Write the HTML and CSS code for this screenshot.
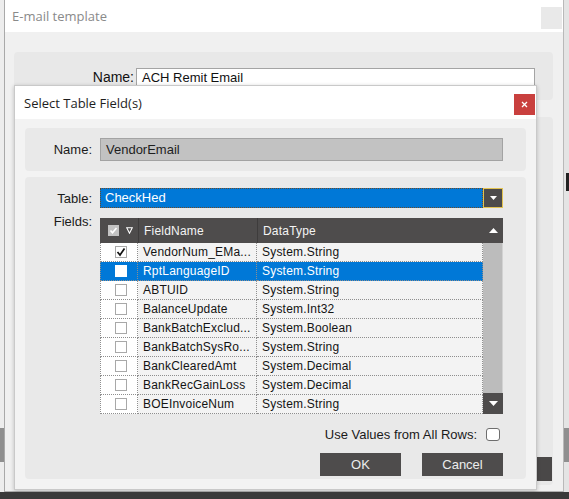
FILE: index.html
```html
<!DOCTYPE html>
<html>
<head>
<meta charset="utf-8">
<link rel="stylesheet" href="styles.css">
</head>
<body>
<div class="desktop">
  <div class="edge edge-left"><div class="edge-block"></div></div>
  <div class="edge edge-right"><div class="edge-mark"></div><div class="edge-block"></div></div>

  <div class="win">
    <div class="win-title">
      <span class="win-title-text">E-mail template</span>
      <span class="win-close"></span>
    </div>
    <div class="win-body">
      <div class="win-panel win-name">
        <span class="win-label">Name:</span>
        <div class="win-input">ACH Remit Email</div>
      </div>
      <div class="win-panel win-main">
        <div class="win-btn"></div>
      </div>
    </div>
  </div>

  <div class="dlg">
    <div class="dlg-title">
      <span class="dlg-title-text">Select Table Field(s)</span>
      <span class="dlg-close">
        <svg width="7" height="7" viewBox="0 0 7 7"><path d="M1 1 L6 6 M6 1 L1 6" stroke="#fff" stroke-width="1.3"/></svg>
      </span>
    </div>
    <div class="dlg-body">
      <div class="panel panel-name">
        <span class="lbl">Name:</span>
        <div class="ro-input">VendorEmail</div>
      </div>
      <div class="panel panel-main">
        <span class="lbl">Table:</span>
        <div class="combo">
          <div class="combo-value">CheckHed</div>
          <div class="combo-btn">
            <svg width="7" height="4" viewBox="0 0 7 4"><polygon points="0,0 7,0 3.5,4" fill="#fff"/></svg>
          </div>
        </div>

        <span class="lbl lbl-fields">Fields:</span>
        <div class="grid">
          <div class="grid-table">
            <div class="hcell hcell-check">
              <span class="hcheck">
                <svg width="11" height="11" viewBox="0 0 11 11"><path d="M2.5 5.5 L4.5 7.8 L8.5 3" stroke="#fff" stroke-width="1.6" fill="none"/></svg>
              </span>
              <svg class="filter" width="7" height="7" viewBox="0 0 7 7"><polygon points="0.7,0.7 6.3,0.7 3.5,6.2" fill="none" stroke="#fff" stroke-width="1.1"/></svg>
            </div>
            <div class="hcell">FieldName</div>
            <div class="hcell">DataType</div>

            <div class="cell cell-check"><span class="cbox"><svg width="10" height="10" viewBox="0 0 10 10"><path d="M1.5 5 L4 8 L8.5 1.5" stroke="#111" stroke-width="1.7" fill="none"/></svg></span></div>
            <div class="cell">VendorNum_EMa...</div>
            <div class="cell">System.String</div>

            <div class="cell cell-check sel"><span class="cbox"></span></div>
            <div class="cell sel">RptLanguageID</div>
            <div class="cell sel">System.String</div>

            <div class="cell cell-check"><span class="cbox"></span></div>
            <div class="cell">ABTUID</div>
            <div class="cell">System.String</div>

            <div class="cell cell-check"><span class="cbox"></span></div>
            <div class="cell">BalanceUpdate</div>
            <div class="cell">System.Int32</div>

            <div class="cell cell-check"><span class="cbox"></span></div>
            <div class="cell">BankBatchExclud...</div>
            <div class="cell">System.Boolean</div>

            <div class="cell cell-check"><span class="cbox"></span></div>
            <div class="cell">BankBatchSysRo...</div>
            <div class="cell">System.String</div>

            <div class="cell cell-check"><span class="cbox"></span></div>
            <div class="cell">BankClearedAmt</div>
            <div class="cell">System.Decimal</div>

            <div class="cell cell-check"><span class="cbox"></span></div>
            <div class="cell">BankRecGainLoss</div>
            <div class="cell">System.Decimal</div>

            <div class="cell cell-check"><span class="cbox"></span></div>
            <div class="cell">BOEInvoiceNum</div>
            <div class="cell">System.String</div>
          </div>
          <div class="scroll">
            <div class="scroll-btn scroll-up">
              <svg width="9" height="5" viewBox="0 0 9 5"><polygon points="0,5 9,5 4.5,0" fill="#fff"/></svg>
            </div>
            <div class="scroll-track"></div>
            <div class="scroll-btn scroll-down">
              <svg width="9" height="5" viewBox="0 0 9 5"><polygon points="0,0 9,0 4.5,5" fill="#fff"/></svg>
            </div>
          </div>
        </div>

        <div class="allrows">
          <span>Use Values from All Rows:</span>
          <span class="allrows-box"></span>
        </div>
        <div class="actions">
          <div class="btn">OK</div>
          <div class="btn">Cancel</div>
        </div>
      </div>
    </div>
  </div>

  <div class="taskbar"></div>
</div>
</body>
</html>
```

FILE: styles.css
```css
* { box-sizing: border-box; }

html, body {
  margin: 0;
  padding: 0;
}

body {
  width: 569px;
  height: 499px;
  overflow: hidden;
  background: #ececec;
  font-family: "Liberation Sans", Arial, sans-serif;
  font-size: 13px;
  color: #1a1a1a;
}

.desktop {
  position: relative;
  width: 569px;
  height: 499px;
}

/* background strips at the screen edges */
.edge {
  position: absolute;
  top: 0;
  height: 492px;
  background: #ededed;
}
.edge-left { left: 0; width: 4px; }
.edge-right { left: 564px; width: 5px; background: #e4e4e4; }
.edge-block {
  position: absolute;
  left: 0;
  top: 428px;
  width: 100%;
  height: 34px;
  background: #8f8f8f;
}
.edge-mark {
  position: absolute;
  left: 2px;
  top: 173px;
  width: 3px;
  height: 18px;
  background: #222;
}

/* outer window */
.win {
  position: absolute;
  left: 4px;
  top: 0;
  width: 560px;
  height: 492px;
  background: #f0f0f0;
  border-left: 1px solid #a9a9a9;
  border-right: 1px solid #b9b9b9;
  border-bottom: 1px solid #b0b0b0;
  display: flex;
  flex-direction: column;
}

.win-title {
  height: 32px;
  background: #fff;
  display: flex;
  align-items: flex-start;
  justify-content: space-between;
  padding-left: 7px;
}
.win-title-text {
  font-family: "Open Sans", "Noto Sans", sans-serif;
  font-size: 13px;
  color: #8a8a8a;
  line-height: 32px;
}
.win-close {
  width: 21px;
  height: 22px;
  margin-top: 7px;
  margin-right: 1px;
  background: #e9e9e9;
}

.win-body {
  padding: 20px 9px 0 9px;
  display: flex;
  flex-direction: column;
  gap: 17px;
}
.win-panel {
  background: #e8e8e8;
  border-radius: 4px;
}
.win-name {
  height: 48px;
  padding-top: 16px;
  display: flex;
  align-items: center;
  align-self: flex-start;
  width: 539px;
}
.win-name {
  align-items: flex-start;
}
.win-label {
  width: 120px;
  text-align: right;
  font-size: 14px;
  line-height: 19px;
  color: #111;
}
.win-input {
  margin-left: 2px;
  width: 399px;
  height: 19px;
  background: #fff;
  border: 1px solid #a4a4a4;
  padding-left: 5px;
  font-size: 13px;
  line-height: 17px;
  color: #111;
}
.win-main {
  height: 368px;
  width: 539px;
  display: flex;
  justify-content: flex-end;
  align-items: flex-end;
  padding: 0 1px 4px 0;
}
.win-btn {
  width: 80px;
  height: 24px;
  background: #4a4848;
}

/* modal dialog */
.dlg {
  position: absolute;
  left: 14px;
  top: 85px;
  width: 523px;
  height: 405px;
  background: #f3f3f3;
  border: 1px solid #c9c9c9;
  box-shadow: 0 1px 4px rgba(0, 0, 0, 0.22);
  display: flex;
  flex-direction: column;
}

.dlg-title {
  height: 33px;
  background: #fff;
  display: flex;
  align-items: center;
  justify-content: space-between;
  padding-left: 9px;
}
.dlg-title-text {
  font-family: "Open Sans", "Noto Sans", sans-serif;
  font-size: 13px;
  color: #1e1e1e;
}
.dlg-close {
  width: 21px;
  height: 21px;
  margin-right: 1px;
  margin-top: 3px;
  background: #c9403e;
  display: flex;
  align-items: center;
  justify-content: center;
}

.dlg-body {
  padding: 9px 10px 0 10px;
  display: flex;
  flex-direction: column;
  gap: 6px;
}

.panel {
  background: #e9e9e9;
  border-radius: 4px;
  display: grid;
  grid-template-columns: 67px 403px;
  column-gap: 8px;
}

.lbl {
  text-align: right;
  font-size: 13px;
  color: #1a1a1a;
}

.panel-name {
  height: 43px;
  align-items: center;
  align-content: center;
}
.ro-input {
  height: 23px;
  background: #c2c2c2;
  border: 1px solid #a3a3a3;
  padding-left: 5px;
  font-size: 13px;
  line-height: 21px;
  color: #1e1e1e;
}

.panel-main {
  height: 302px;
  padding-top: 11px;
  align-content: start;
  align-items: center;
}

.combo {
  height: 20px;
  display: flex;
}
.combo-value {
  flex: 1;
  background: #0078d7;
  color: #fff;
  font-size: 13px;
  line-height: 18px;
  padding-left: 4px;
  border: 1px dotted #6b4a2a;
}
.combo-btn {
  width: 20px;
  background: #4d4b4b;
  border: 1px solid #e2c351;
  display: flex;
  align-items: center;
  justify-content: center;
}

.lbl-fields {
  align-self: start;
  margin-top: 6px;
}

.grid {
  margin-top: 10px;
  height: 196px;
  display: flex;
}
.grid-table {
  width: 383px;
  display: grid;
  grid-template-columns: 38px 119px 226px;
  grid-template-rows: 25px repeat(9, 19px);
  font-size: 12px;
  letter-spacing: 0.2px;
}
.hcell {
  background: #4e4c4c;
  color: #f4f4f4;
  display: flex;
  align-items: center;
  padding-left: 5px;
  border-left: 1px solid #3e3c3c;
}
.hcell-check {
  border-left: none;
  padding-left: 8px;
  gap: 7px;
}
.hcheck {
  width: 11px;
  height: 11px;
  background: #c3c3c3;
  display: flex;
}

.cell {
  background: #f3f3f3;
  color: #141414;
  display: flex;
  align-items: center;
  padding-left: 5px;
  border-right: 1px dotted #8e8e8e;
  border-bottom: 1px dotted #8e8e8e;
  white-space: nowrap;
  overflow: hidden;
}
.cell-check {
  background: #fff;
  padding-left: 14px;
  border-left: 1px dotted #8e8e8e;
}
.cell.sel {
  background: #0078d7;
  color: #fff;
}
.cbox {
  width: 12px;
  height: 12px;
  background: #fff;
  border: 1px solid #a8a8a8;
  display: flex;
  align-items: center;
  justify-content: center;
}
.sel .cbox {
  border-color: #ffffff;
}

.scroll {
  width: 20px;
  display: flex;
  flex-direction: column;
}
.scroll-btn {
  background: #4e4c4c;
  display: flex;
  align-items: center;
  justify-content: center;
}
.scroll-up { height: 25px; }
.scroll-down { height: 21px; }
.scroll-track {
  flex: 1;
  background: #bcbcbc;
  border-right: 1px solid #d2d2d2;
}

.allrows {
  grid-column: 2;
  margin-top: 13px;
  display: flex;
  justify-content: flex-end;
  align-items: center;
  gap: 9px;
  padding-right: 3px;
  font-size: 13px;
  color: #1a1a1a;
}
.allrows-box {
  width: 14px;
  height: 13px;
  background: #fff;
  border: 1px solid #6e6e6e;
  border-radius: 3px;
}

.actions {
  grid-column: 2;
  margin-top: 11px;
  display: flex;
  justify-content: flex-end;
  gap: 21px;
}
.btn {
  width: 81px;
  height: 23px;
  background: #4e4c4c;
  color: #ececec;
  font-size: 13px;
  display: flex;
  align-items: center;
  justify-content: center;
}

.taskbar {
  position: absolute;
  left: 0;
  top: 492px;
  width: 569px;
  height: 7px;
  background: #3a3a3a;
}
```
